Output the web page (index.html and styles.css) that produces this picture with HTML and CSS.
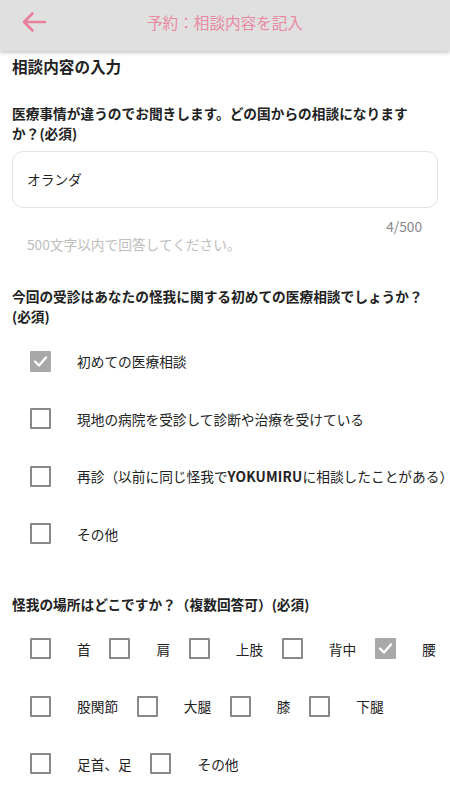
FILE: index.html
```html
<!DOCTYPE html>
<html lang="ja">
<head>
<meta charset="utf-8">
<title>予約：相談内容を記入</title>
<link rel="stylesheet" href="styles.css">
</head>
<body>
<header class="appbar">
  <div class="appbar-side">
    <svg class="back" width="26" height="22" viewBox="0 0 26 22"><path d="M24 11H3.5M11.5 2.5L3 11l8.5 8.5" fill="none" stroke="#e8809b" stroke-width="2.6" stroke-linecap="round" stroke-linejoin="round"/></svg>
  </div>
  <div class="appbar-title">予約：相談内容を記入</div>
  <div class="appbar-side"></div>
</header>
<main class="content">
  <h1 class="section-title">相談内容の入力</h1>

  <p class="question q1">医療事情が違うのでお聞きします。どの国からの相談になりますか？(必須)</p>
  <div class="textbox">オランダ</div>
  <div class="counter">4/500</div>
  <div class="hint">500文字以内で回答してください。</div>

  <p class="question q2">今回の受診はあなたの怪我に関する初めての医療相談でしょうか？(必須)</p>
  <div class="options">
    <div class="option"><span class="cb checked"><svg viewBox="0 0 21 21" width="21" height="21"><polyline points="5,10.5 9,14.5 16,6.5" fill="none" stroke="#fff" stroke-width="2.4" stroke-linecap="round" stroke-linejoin="round"/></svg></span><span class="label">初めての医療相談</span></div>
    <div class="option"><span class="cb"></span><span class="label">現地の病院を受診して診断や治療を受けている</span></div>
    <div class="option"><span class="cb"></span><span class="label">再診（以前に同じ怪我で<b class="latin">YOKUMIRU</b>に相談したことがある）</span></div>
    <div class="option"><span class="cb"></span><span class="label">その他</span></div>
  </div>

  <p class="question q3">怪我の場所はどこですか？（複数回答可）(必須)</p>
  <div class="grid-options">
    <div class="grid-row">
      <div class="gitem"><span class="cb"></span><span class="label">首</span></div>
      <div class="gitem"><span class="cb"></span><span class="label">肩</span></div>
      <div class="gitem"><span class="cb"></span><span class="label">上肢</span></div>
      <div class="gitem"><span class="cb"></span><span class="label">背中</span></div>
      <div class="gitem"><span class="cb checked"><svg viewBox="0 0 21 21" width="21" height="21"><polyline points="5,10.5 9,14.5 16,6.5" fill="none" stroke="#fff" stroke-width="2.4" stroke-linecap="round" stroke-linejoin="round"/></svg></span><span class="label">腰</span></div>
    </div>
    <div class="grid-row">
      <div class="gitem"><span class="cb"></span><span class="label">股関節</span></div>
      <div class="gitem"><span class="cb"></span><span class="label">大腿</span></div>
      <div class="gitem"><span class="cb"></span><span class="label">膝</span></div>
      <div class="gitem"><span class="cb"></span><span class="label">下腿</span></div>
    </div>
    <div class="grid-row">
      <div class="gitem"><span class="cb"></span><span class="label">足首、足</span></div>
      <div class="gitem"><span class="cb"></span><span class="label">その他</span></div>
    </div>
  </div>
</main>
</body>
</html>
```
FILE: styles.css
```css
* { box-sizing: border-box; }
html, body {
  margin: 0;
  padding: 0;
  background: #fff;
  font-family: "Noto Sans CJK JP", "Noto Sans", sans-serif;
  color: #222;
  overflow: hidden;
}
.appbar {
  height: 51px;
  background: #e0e0e0;
  display: flex;
  align-items: center;
  box-shadow: 0 2px 4px rgba(0,0,0,0.22);
  position: relative;
  z-index: 1;
}
.appbar-side {
  width: 60px;
  display: flex;
  align-items: center;
  padding-left: 21px;
  padding-bottom: 7px;
}
.back { display: block; }
.appbar-title {
  flex: 1;
  text-align: center;
  color: #e88aa2;
  font-size: 15.6px;
  line-height: 22px;
  padding-bottom: 8px;
}
.content {
  padding: 0 16px 0 12px;
}
.section-title {
  margin: 4px 0 0;
  font-size: 15.6px;
  line-height: 22px;
  font-weight: 700;
}
.question {
  margin: 0;
  font-size: 13.7px;
  line-height: 19.5px;
  font-weight: 700;
}
.q1 { margin-top: 27px; }
.q2 { margin-top: 33px; line-height: 20px; }
.q3 { margin-top: 31.5px; line-height: 20px; }
.textbox {
  margin-top: 7.5px;
  margin-right: -4px;
  height: 57px;
  border: 1px solid #e2e2e2;
  border-radius: 11px;
  display: flex;
  align-items: center;
  padding-left: 14px;
  font-size: 13.7px;
}
.counter {
  margin-top: 9px;
  text-align: right;
  padding-right: 12px;
  font-size: 13.7px;
  line-height: 18px;
  color: #888;
}
.hint {
  padding-left: 15px;
  font-size: 13.7px;
  line-height: 18px;
  color: #bdbdbd;
}
.options {
  margin-top: 7px;
}
.option {
  height: 57.5px;
  display: flex;
  align-items: center;
  padding-left: 18px;
  white-space: nowrap;
}
.cb {
  flex: none;
  width: 21px;
  height: 21px;
  border: 2px solid #888;
  border-radius: 1px;
  margin-right: 26px;
  display: block;
  position: relative;
}
.cb.checked {
  border-color: #a8a8a8;
  background: #a8a8a8;
}
.cb svg {
  position: absolute;
  left: -2px;
  top: -2px;
}
.label {
  font-size: 13.7px;
  line-height: 20px;
  color: #222;
}
.latin {
  font-weight: 700;
  letter-spacing: 0.2px;
}
.grid-options {
  margin-top: 6px;
}
.grid-row {
  height: 57.5px;
  display: flex;
  align-items: center;
  padding-left: 18px;
  gap: 18.7px;
  white-space: nowrap;
}
.gitem {
  display: flex;
  align-items: center;
}
```
